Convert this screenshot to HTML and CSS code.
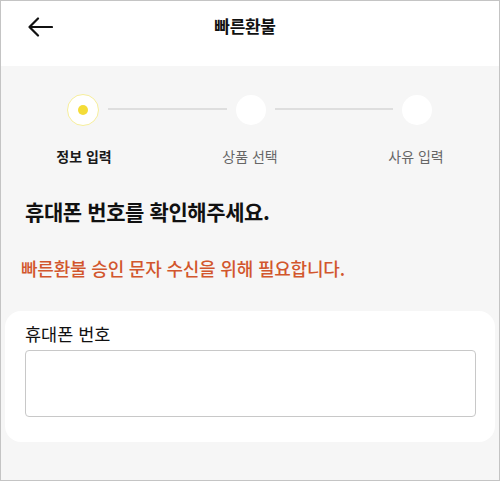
FILE: index.html
```html
<!DOCTYPE html>
<html lang="ko">
<head>
<meta charset="utf-8">
<title>빠른환불</title>
<link rel="stylesheet" href="styles.css">
</head>
<body>
<div class="frame">
  <header class="topbar">
    <button class="back" aria-label="뒤로">
      <svg width="26" height="20" viewBox="0 0 26 20"><path d="M11 1.5 L2.5 10 L11 18.5 M2.5 10 H25" fill="none" stroke="#111" stroke-width="2.2" stroke-linecap="round" stroke-linejoin="round"/></svg>
    </button>
    <h1 class="title">빠른환불</h1>
  </header>
  <main class="content">
    <div class="stepper">
      <div class="track">
        <span class="dot active"><span class="inner"></span></span>
        <span class="line"></span>
        <span class="dot"></span>
        <span class="line"></span>
        <span class="dot"></span>
      </div>
      <div class="labels">
        <span class="label current">정보 입력</span>
        <span class="label">상품 선택</span>
        <span class="label">사유 입력</span>
      </div>
    </div>
    <h2 class="heading">휴대폰 번호를 확인해주세요.</h2>
    <p class="notice">빠른환불 승인 문자 수신을 위해 필요합니다.</p>
    <section class="card">
      <label class="field-label" for="phone">휴대폰 번호</label>
      <input id="phone" class="field" type="tel">
    </section>
  </main>
</div>
</body>
</html>
```
FILE: styles.css
```css
* { box-sizing: border-box; }
html, body { margin: 0; padding: 0; }
body {
  font-family: "Noto Sans CJK KR", "Noto Sans", sans-serif;
  color: #111;
}
.frame {
  width: 500px;
  height: 481px;
  border: 1px solid #c4c4c4;
  background: #f6f6f6;
  overflow: hidden;
}
.topbar {
  height: 65px;
  background: #fff;
  display: flex;
  align-items: flex-start;
  padding: 0 0 0 26px;
}
.back {
  border: 0;
  background: none;
  padding: 0;
  width: 26px;
  height: 20px;
  display: flex;
  margin-top: 16px;
}
.title {
  flex: 1;
  margin: 13px 0 0 0;
  padding-right: 62px;
  text-align: center;
  font-size: 17px;
  line-height: 24px;
  font-weight: 700;
  letter-spacing: -0.3px;
}
.content { padding-top: 28px; }
.track {
  display: flex;
  align-items: center;
  padding: 0 67px 0 66px;
  height: 32px;
}
.dot {
  width: 30px;
  height: 30px;
  border-radius: 50%;
  background: #fff;
  flex: none;
}
.dot.active {
  width: 32px;
  height: 32px;
  border: 1.5px solid #f6ee9c;
  display: flex;
  align-items: center;
  justify-content: center;
}
.inner {
  width: 10px;
  height: 10px;
  border-radius: 50%;
  background: #f4dc38;
}
.line {
  flex: 1;
  height: 2px;
  margin: -3px 9px 0;
  background: #dedede;
}
.labels {
  display: grid;
  grid-template-columns: repeat(3, 1fr);
  margin-top: 20px;
}
.label {
  text-align: center;
  font-size: 14px;
  color: #666;
  line-height: 20px;
}
.label.current { color: #1a1a1a; font-weight: 700; }
.heading {
  margin: 31px 0 0 24px;
  font-size: 21px;
  font-weight: 700;
  line-height: 28px;
  letter-spacing: -0.4px;
}
.notice {
  margin: 31px 0 0 20px;
  font-size: 18px;
  line-height: 24px;
  font-weight: 500;
  color: #d2562d;
  letter-spacing: -0.2px;
}
.card {
  margin: 31px 4px 0 4px;
  background: #fff;
  border-radius: 16px;
  padding: 10px 19px 24px 20px;
  height: 131px;
}
.field-label {
  display: block;
  font-size: 17.5px;
  line-height: 26px;
  color: #111;
}
.field {
  display: block;
  width: 100%;
  height: 67px;
  margin-top: 3px;
  border: 1px solid #c8c8c8;
  border-radius: 4px;
  background: #fff;
}
```
